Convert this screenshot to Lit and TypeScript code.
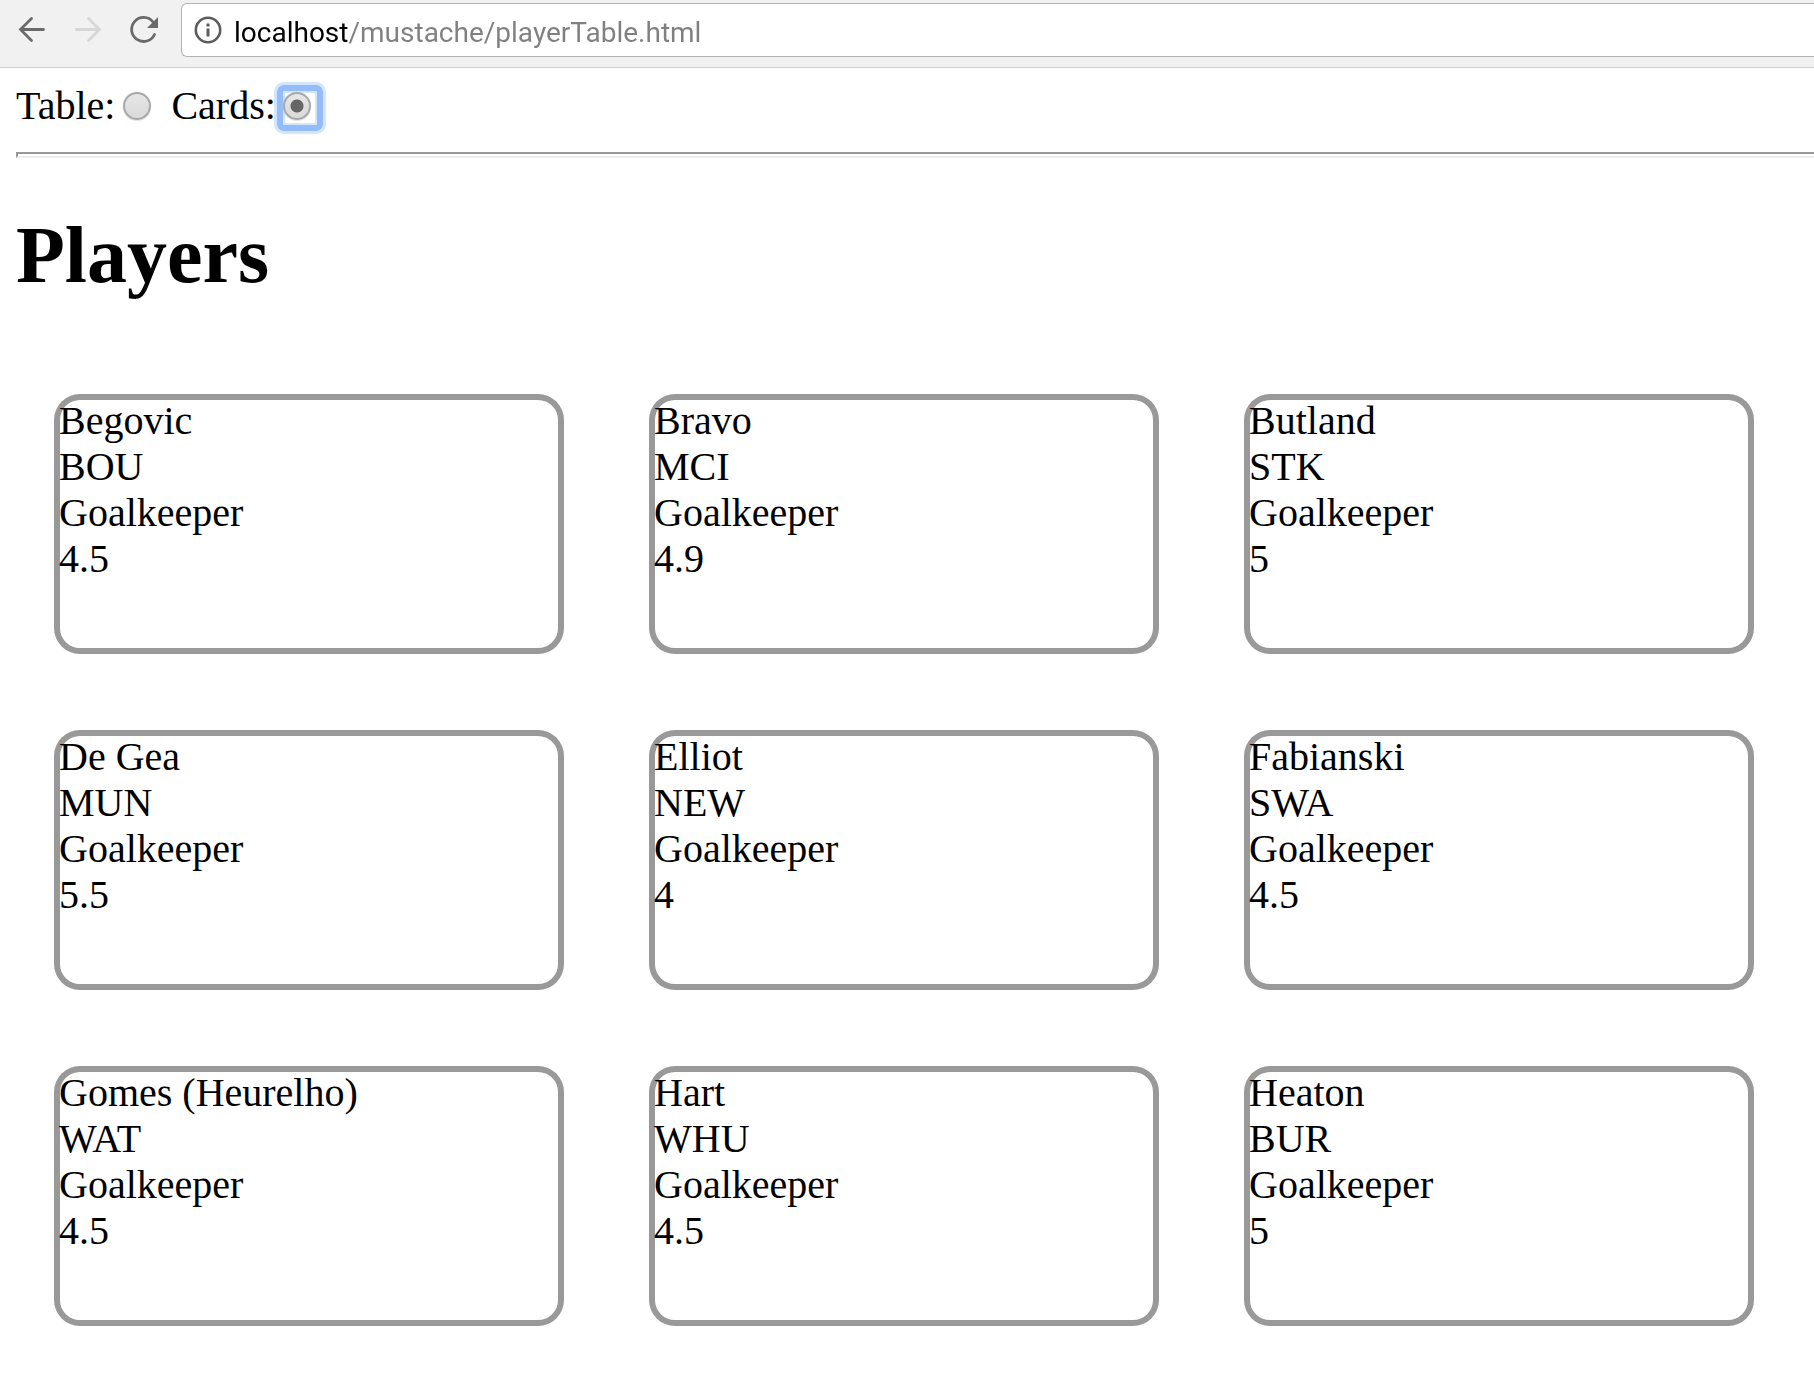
import { LitElement, html, css } from "lit";
import { customElement, state } from "lit/decorators.js";
import { classMap } from "lit/directives/class-map.js";

type View = "table" | "cards";

interface Player {
  name: string;
  team: string;
  position: string;
  price: number;
}

const PLAYERS: Player[] = [
  { name: "Begovic", team: "BOU", position: "Goalkeeper", price: 4.5 },
  { name: "Bravo", team: "MCI", position: "Goalkeeper", price: 4.9 },
  { name: "Butland", team: "STK", position: "Goalkeeper", price: 5 },
  { name: "De Gea", team: "MUN", position: "Goalkeeper", price: 5.5 },
  { name: "Elliot", team: "NEW", position: "Goalkeeper", price: 4 },
  { name: "Fabianski", team: "SWA", position: "Goalkeeper", price: 4.5 },
  { name: "Gomes (Heurelho)", team: "WAT", position: "Goalkeeper", price: 4.5 },
  { name: "Hart", team: "WHU", position: "Goalkeeper", price: 4.5 },
  { name: "Heaton", team: "BUR", position: "Goalkeeper", price: 5 },
];

@customElement("browser-bar")
class BrowserBar extends LitElement {
  static styles = css`
    :host {
      display: block;
    }
    .bar {
      display: flex;
      align-items: flex-start;
      height: 67px;
      background: #f1f1f1;
      border-bottom: 1px solid #d0d0d0;
      overflow: hidden;
    }
    .nav {
      display: flex;
      gap: 16px;
      padding: 10px 17px 0 12px;
    }
    .nav-button {
      width: 40px;
      height: 40px;
      padding: 0;
      border: 0;
      background: none;
      color: #6a6a6a;
    }
    .nav-button:disabled {
      color: #d6d6d6;
    }
    .icon {
      display: block;
      width: 40px;
      height: 40px;
    }
    .address {
      display: flex;
      flex: 1;
      align-items: center;
      gap: 11px;
      box-sizing: border-box;
      height: 54px;
      margin-top: 3px;
      padding-left: 11px;
      border: 1px solid #b3b3b3;
      border-right: 0;
      border-radius: 6px 0 0 6px;
      background: #fff;
    }
    .info {
      display: block;
      flex: none;
      width: 30px;
      height: 30px;
      color: #5c5c5c;
    }
    .url {
      flex: 1;
      min-width: 0;
      height: 44px;
      padding: 4px 0 0;
      border: 0;
      outline: 0;
      font: 28px/40px Roboto, "Liberation Sans", sans-serif;
      background: linear-gradient(to right, #000 115px, #808080 115px);
      -webkit-background-clip: text;
      background-clip: text;
      -webkit-text-fill-color: transparent;
      caret-color: #000;
    }
  `;

  render() {
    return html`
      <div class="bar">
        <nav class="nav" aria-label="History">
          <button class="nav-button" type="button" aria-label="Back">
            <svg class="icon" viewBox="0 0 40 40" fill="none" stroke="currentColor" stroke-width="2.8" stroke-linecap="round">
              <path d="M31.5 19.5H8.5M19.5 8.5L8.5 19.5L19.5 30.5" />
            </svg>
          </button>
          <button class="nav-button" type="button" aria-label="Forward" disabled>
            <svg class="icon" viewBox="0 0 40 40" fill="none" stroke="currentColor" stroke-width="2.8" stroke-linecap="round">
              <path d="M8.5 19.5H31.5M20.5 8.5L31.5 19.5L20.5 30.5" />
            </svg>
          </button>
          <button class="nav-button" type="button" aria-label="Reload">
            <svg class="icon" viewBox="0 0 40 40" fill="none" stroke="currentColor" stroke-width="2.8" stroke-linecap="round">
              <path d="M29 12A12 12 0 1 0 30.5 24.5" />
              <path d="M34 7V18H23Z" fill="currentColor" stroke="none" />
            </svg>
          </button>
        </nav>
        <div class="address">
          <svg class="info" viewBox="0 0 30 30" fill="none" stroke="currentColor" stroke-width="2.6" aria-hidden="true">
            <circle cx="15" cy="15" r="12.2" />
            <path d="M15 13.5V21.5M15 8.5V11.5" stroke-width="3" />
          </svg>
          <input class="url" type="text" aria-label="Address" spellcheck="false" value="localhost/mustache/playerTable.html" />
        </div>
      </div>
    `;
  }
}

@customElement("app-root")
class AppRoot extends LitElement {
  @state() private view: View = "cards";
  @state() private focused: View | null = "cards";

  static styles = css`
    :host {
      display: block;
      background: #fff;
      color: #000;
      font: 40px/46px "Liberation Serif", "Times New Roman", serif;
    }
    .page {
      padding: 15px 0 0 16px;
    }
    .views {
      display: flex;
      gap: 9px;
    }
    .view {
      display: flex;
      align-items: flex-start;
    }
    .radio {
      appearance: none;
      display: grid;
      place-items: center;
      box-sizing: border-box;
      width: 46px;
      height: 46px;
      margin: 2px 0 0 1px;
      border: 6px solid transparent;
      border-radius: 7px;
      outline: 0;
    }
    .radio::before {
      content: "";
      box-sizing: border-box;
      width: 28px;
      height: 28px;
      margin: 0 5px 5px 0;
      border: 2px solid #a8a8a8;
      border-radius: 50%;
      background: linear-gradient(#e6e6e6, #dadada);
      box-shadow: 0 1px 1px #e0e0e0;
    }
    .radio:checked::before {
      background: radial-gradient(circle, #666 6px, transparent 7px), linear-gradient(#e8e8e8, #d8d8d8);
      background-origin: border-box;
    }
    .radio.focused {
      border-color: #93bcf9;
      box-shadow: 0 0 0 3px #d3e4fd, inset 0 0 0 2px #d3e4fd;
    }
    .rule {
      height: 2px;
      margin: 21px 0 0;
      border: 2px solid;
      border-color: #999 #eee #eee #999;
      border-right: 0;
    }
    .title {
      margin: 51px 0 93px;
      font-size: 80px;
      line-height: 92px;
    }
    .cards {
      display: grid;
      grid-template-columns: repeat(3, 1fr);
      gap: 76px 85px;
      margin: 0;
      padding: 0 60px 76px 38px;
      list-style: none;
    }
    .card {
      box-sizing: border-box;
      min-height: 260px;
      padding: 4px 5px 8px;
      border-radius: 26px;
      box-shadow: inset 0 0 0 6px #999;
    }
    .table {
      margin-left: 38px;
      border-spacing: 20px 4px;
      text-align: left;
    }
  `;

  private renderRadio(view: View, label: string) {
    return html`
      <label class="view">
        ${label}:
        <input
          class=${classMap({ radio: true, focused: this.focused === view })}
          type="radio"
          name="view"
          .checked=${this.view === view}
          @change=${() => (this.view = view)}
          @focus=${() => (this.focused = view)}
          @blur=${() => (this.focused = null)}
        />
      </label>
    `;
  }

  private renderCards() {
    return html`
      <ul class="cards">
        ${PLAYERS.map(
          (p) => html`
            <li class="card">
              <div>${p.name}</div>
              <div>${p.team}</div>
              <div>${p.position}</div>
              <div>${p.price}</div>
            </li>
          `
        )}
      </ul>
    `;
  }

  private renderTable() {
    return html`
      <table class="table">
        <tbody>
          ${PLAYERS.map(
            (p) => html`
              <tr>
                <td>${p.name}</td>
                <td>${p.team}</td>
                <td>${p.position}</td>
                <td>${p.price}</td>
              </tr>
            `
          )}
        </tbody>
      </table>
    `;
  }

  render() {
    return html`
      <browser-bar></browser-bar>
      <main class="page">
        <div class="views">${this.renderRadio("table", "Table")}${this.renderRadio("cards", "Cards")}</div>
        <hr class="rule" />
        <h1 class="title">Players</h1>
        ${this.view === "cards" ? this.renderCards() : this.renderTable()}
      </main>
    `;
  }
}
